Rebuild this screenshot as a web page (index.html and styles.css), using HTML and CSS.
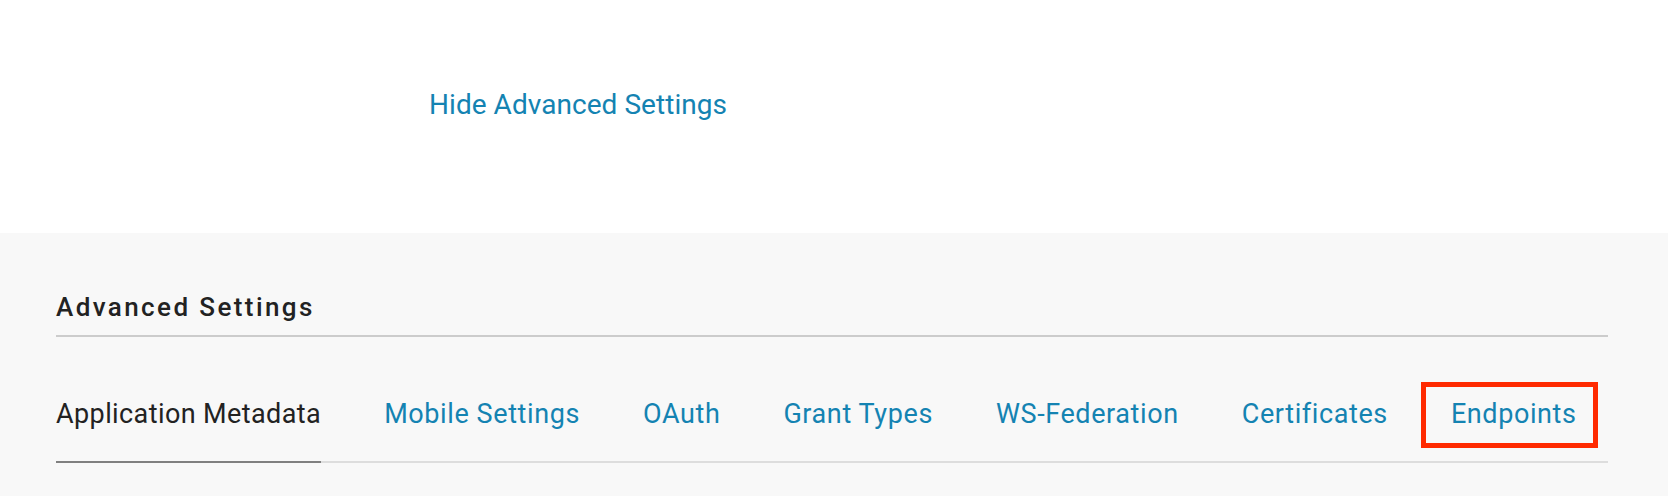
FILE: index.html
```html
<!DOCTYPE html>
<html lang="en">
<head>
<meta charset="utf-8">
<title>Advanced Settings</title>
<link rel="stylesheet" href="styles.css">
</head>
<body>
  <div class="top">
    <a class="toggle" href="#">Hide Advanced Settings</a>
  </div>
  <section class="panel">
    <h2 class="panel-title">Advanced Settings</h2>
    <nav class="tabs">
      <a class="tab active" href="#">Application Metadata</a>
      <a class="tab" href="#">Mobile Settings</a>
      <a class="tab" href="#">OAuth</a>
      <a class="tab" href="#">Grant Types</a>
      <a class="tab" href="#">WS-Federation</a>
      <a class="tab" href="#">Certificates</a>
      <a class="tab highlighted" href="#">Endpoints<span class="mark"></span></a>
    </nav>
  </section>
</body>
</html>
```

FILE: styles.css
```css
html, body {
  margin: 0;
  padding: 0;
  background: #ffffff;
}
body {
  font-family: Roboto, "Liberation Sans", sans-serif;
  width: 1680px;
  height: 496px;
  overflow: hidden;
}
a {
  text-decoration: none;
}
.top {
  height: 233px;
  box-sizing: border-box;
  padding: 89px 0 0 429px;
}
.toggle {
  display: inline-block;
  font-size: 28px;
  line-height: 32px;
  color: #1483b2;
  letter-spacing: 0.05px;
}
.panel {
  width: 1668px;
  height: 263px;
  box-sizing: border-box;
  background: #f8f8f8;
  padding: 59px 60px 0 56px;
}
.panel-title {
  margin: 0;
  font-size: 26px;
  line-height: 30px;
  font-weight: 500;
  letter-spacing: 2.4px;
  color: #222222;
  padding-bottom: 13px;
  border-bottom: 2px solid #cccccc;
}
.tabs {
  display: flex;
  gap: 63px;
  margin-top: 61px;
  border-bottom: 2px solid #dddddd;
}
.tab {
  position: relative;
  font-size: 27px;
  line-height: 32px;
  letter-spacing: 0.6px;
  color: #1483b2;
  padding-bottom: 31px;
  margin-bottom: -2px;
  border-bottom: 2px solid transparent;
}
.tab.active {
  color: #222222;
  letter-spacing: 0.4px;
  border-bottom-color: #808080;
}
.mark {
  position: absolute;
  left: -30px;
  top: -16px;
  width: 177px;
  height: 66px;
  box-sizing: border-box;
  border: 5px solid #ff2a00;
}
```
